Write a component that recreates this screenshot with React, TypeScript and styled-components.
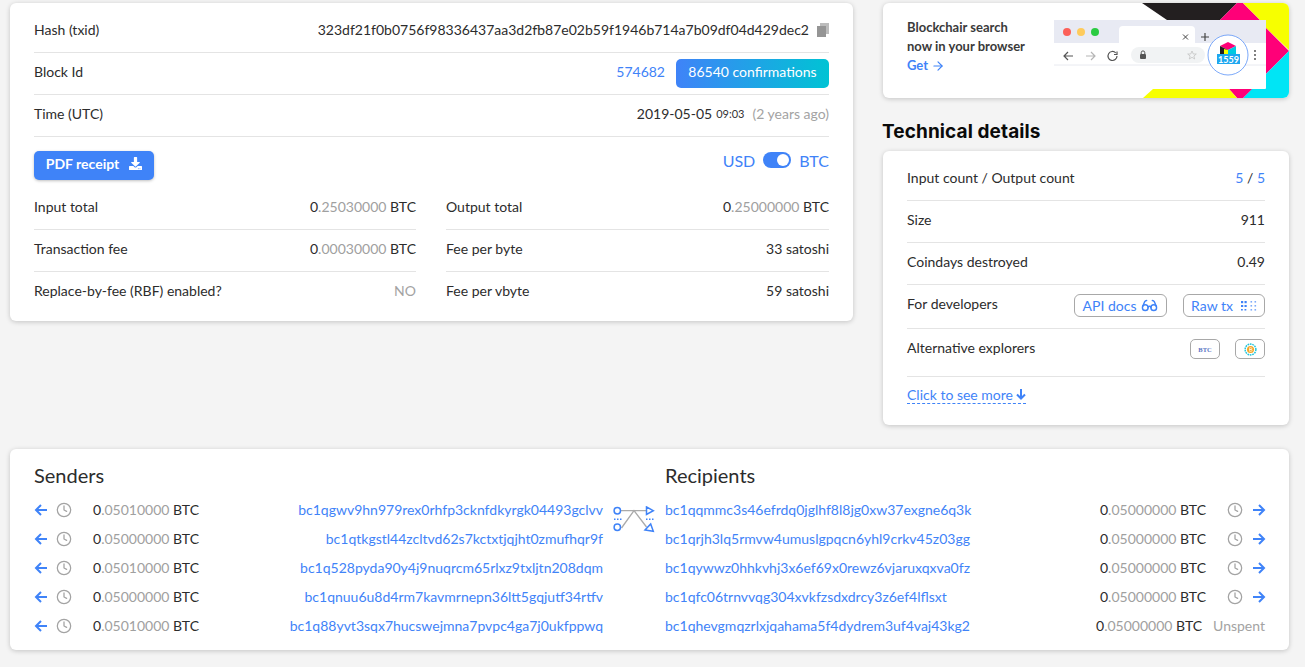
import React from "react";
import styled, { createGlobalStyle } from "styled-components";
import { ArrowRight, Clock, Glasses } from "lucide-react";
import { FaDownload } from "react-icons/fa";

const blue = "#3f83f8";
const line = "#e4e4e4";

const GlobalStyle = createGlobalStyle`
  html, body {
    margin: 0;
    padding: 0;
    background: #f4f4f4;
    font-family: "Lato", "Liberation Sans", sans-serif;
    font-size: 14px;
    color: #2c2c2c;
  }
  * { box-sizing: border-box; }
`;

const Page = styled.div`
  width: 1305px;
  height: 667px;
  overflow: hidden;
  padding: 3px 16px 0 10px;
`;

const TopGrid = styled.div`
  display: grid;
  grid-template-columns: 843px 406px;
  column-gap: 30px;
  align-items: start;
  height: 446px;
`;

const Card = styled.div`
  background: #fff;
  border-radius: 6px;
  box-shadow: 0 1px 5px rgba(0, 0, 0, 0.2);
`;

const MainCard = styled(Card)`
  height: 318px;
  padding: 8px 24px 0;
`;

const Row = styled.div<{ $h?: number; $pb?: number; $last?: boolean }>`
  display: flex;
  align-items: center;
  justify-content: space-between;
  height: ${(p) => p.$h ?? 42}px;
  padding-bottom: ${(p) => p.$pb ?? 4}px;
  border-bottom: ${(p) => (p.$last ? "none" : `1px solid ${line}`)};
`;

const Value = styled.div`
  display: flex;
  align-items: center;
`;

const BlueLink = styled.span`
  color: ${blue};
`;

const CopyWrap = styled.span`
  display: flex;
  margin-left: 8px;
  margin-top: 1px;
`;

const Confirmations = styled.div`
  margin-left: 11px;
  margin-top: 4px;
  width: 153px;
  height: 29px;
  padding-bottom: 4px;
  display: flex;
  align-items: center;
  justify-content: center;
  color: #fff;
  border-radius: 5px;
  background: linear-gradient(90deg, #3f83f8, #00c3d4);
`;

const SmallTime = styled.span`
  font-size: 11px;
  margin-left: 4px;
  color: #333;
`;

const Muted = styled.span`
  color: #a3a3a3;
`;

const Ago = styled(Muted)`
  margin-left: 8px;
`;

const ActionBar = styled.div`
  display: flex;
  justify-content: space-between;
  align-items: flex-start;
  padding-top: 14px;
  height: 51px;
`;

const PdfButton = styled.button`
  display: flex;
  align-items: center;
  justify-content: center;
  gap: 10px;
  width: 120px;
  height: 29px;
  padding: 0 0 5px;
  border: none;
  border-radius: 5px;
  background: ${blue};
  color: #fff;
  font: 700 14px "Lato", sans-serif;
  box-shadow: 0 1px 3px rgba(0, 0, 0, 0.25);
`;

const CurrencySwitch = styled.div`
  display: flex;
  align-items: center;
  gap: 8px;
  font-size: 16px;
  height: 20px;
  margin-top: -1px;
  color: ${blue};
`;

const Toggle = styled.div`
  width: 28px;
  height: 16px;
  border-radius: 8px;
  background: ${blue};
  display: flex;
  justify-content: flex-end;
  align-items: center;
  padding-right: 2px;
  &::after {
    content: "";
    width: 12px;
    height: 12px;
    border-radius: 50%;
    background: #fff;
  }
`;

const Totals = styled.div`
  display: grid;
  grid-template-columns: 382px 383px;
  column-gap: 30px;
`;

const AmountWrap = styled.span`
  white-space: nowrap;
`;

const AmountDecimals = styled.span`
  color: #a0a0a0;
`;

const Amount: React.FC<{ value: string }> = ({ value }) => {
  const [whole, decimals] = value.split(".");
  return (
    <AmountWrap>
      {whole}
      <AmountDecimals>.{decimals}</AmountDecimals> BTC
    </AmountWrap>
  );
};

const Side = styled.div`
  display: flex;
  flex-direction: column;
`;

const Banner = styled(Card)`
  height: 95px;
  overflow: hidden;
  display: flex;
  justify-content: space-between;
  padding-left: 24px;
`;

const BannerText = styled.div`
  padding-top: 15px;
  font-size: 13px;
  font-weight: 700;
  line-height: 19px;
  color: #3a3a3a;
`;

const GetLink = styled.div`
  display: flex;
  align-items: center;
  gap: 3px;
  color: ${blue};
`;

const SideTitle = styled.h2`
  margin: 23px 0 8px -1px;
  font: 700 19px/22px "Inter", sans-serif;
  letter-spacing: 0.1px;
  color: #0a0a0a;
`;

const DetailsCard = styled(Card)`
  height: 274px;
  padding: 8px 24px 0;
`;

const OutlineButton = styled.div<{ $w: number; $gap: number }>`
  width: ${(p) => p.$w}px;
  height: 23px;
  margin-top: 4px;
  display: flex;
  align-items: center;
  justify-content: center;
  gap: ${(p) => p.$gap}px;
  border: 1px solid #a8a8a8;
  border-radius: 6px;
  color: ${blue};
`;

const Chip = styled.div`
  width: 30px;
  height: 20px;
  margin-top: 3px;
  display: flex;
  align-items: center;
  justify-content: center;
  border: 1px solid #a8a8a8;
  border-radius: 5px;
`;

const ChipText = styled.span`
  font: 700 6.5px "Liberation Serif", serif;
  color: #5b73c4;
`;

const ButtonGroup = styled.div<{ $gap: number }>`
  display: flex;
  gap: ${(p) => p.$gap}px;
`;

const SeeMore = styled.div`
  display: inline-flex;
  align-items: center;
  gap: 3px;
  margin-top: 9px;
  color: ${blue};
  border-bottom: 1px dashed ${blue};
  line-height: 17px;
`;

const FlowCard = styled(Card)`
  height: 201px;
  padding: 13px 24px 0;
  display: grid;
  grid-template-columns: 569px 62px 600px;
`;

const FlowTitle = styled.h3`
  margin: 0 0 7px;
  font-size: 20px;
  font-weight: 400;
  line-height: 26px;
  color: #2c2c2c;
`;

const FlowMiddle = styled.div`
  display: flex;
  justify-content: center;
  padding-top: 44px;
`;

const FlowRow = styled.div`
  display: flex;
  align-items: center;
  height: 29px;
`;

const FlowAmount = styled.div`
  margin-left: 21px;
`;

const FlowAddress = styled.span`
  margin-left: auto;
  color: ${blue};
`;

const RecipientAmount = styled.div`
  margin-left: auto;
`;

const ClockIcon = styled(Clock)<{ $left: number }>`
  margin-left: ${(p) => p.$left}px;
  color: #a3a3a3;
  flex: none;
`;

const FlowArrow = styled.svg<{ $flip?: boolean }>`
  width: 14px;
  height: 14px;
  flex: none;
  margin-right: ${(p) => (p.$flip ? "-1px" : "0")};
  margin-left: ${(p) => (p.$flip ? "9px" : "0")};
  transform: ${(p) => (p.$flip ? "scaleX(-1)" : "none")};
`;

const Unspent = styled(Muted)`
  margin-left: 11px;
`;

const RecipientAddress = styled.span`
  color: ${blue};
`;

const senders = [
  ["0.05010000", "bc1qgwv9hn979rex0rhfp3cknfdkyrgk04493gclvv"],
  ["0.05000000", "bc1qtkgstl44zcltvd62s7kctxtjqjht0zmufhqr9f"],
  ["0.05010000", "bc1q528pyda90y4j9nuqrcm65rlxz9txljtn208dqm"],
  ["0.05000000", "bc1qnuu6u8d4rm7kavmrnepn36ltt5gqjutf34rtfv"],
  ["0.05010000", "bc1q88yvt3sqx7hucswejmna7pvpc4ga7j0ukfppwq"],
];

const recipients = [
  ["0.05000000", "bc1qqmmc3s46efrdq0jglhf8l8jg0xw37exgne6q3k"],
  ["0.05000000", "bc1qrjh3lq5rmvw4umuslgpqcn6yhl9crkv45z03gg"],
  ["0.05000000", "bc1qywwz0hhkvhj3x6ef69x0rewz6vjaruxqxva0fz"],
  ["0.05000000", "bc1qfc06trnvvqg304xvkfzsdxdrcy3z6ef4lflsxt"],
  ["0.05000000", "bc1qhevgmqzrlxjqahama5f4dydrem3uf4vaj43kg2"],
];

const SideArrow: React.FC<{ flip?: boolean }> = ({ flip }) => (
  <FlowArrow $flip={flip} viewBox="0 0 14 14" fill="none">
    <path d="M13 7H2M7 2L2 7l5 5" stroke={blue} strokeWidth="2" />
  </FlowArrow>
);

const DownArrow = () => (
  <svg width="10" height="11" viewBox="0 0 10 11" fill="none">
    <path d="M5 0v9.500M1 5.500l4 4 4-4" stroke={blue} strokeWidth="2" />
  </svg>
);

const CopySheets = () => (
  <svg width="12" height="14" viewBox="0 0 12 14">
    <rect x="3" y="0" width="9" height="11" fill="#bcbcbc" />
    <rect x="0" y="3" width="9" height="11" fill="#959595" />
  </svg>
);

const BrowserArt = () => (
  <svg width="235" height="95" viewBox="0 0 235 95">
    <polygon points="88,0 183,0 166,17 113,17" fill="#231f20" />
    <polygon points="183,0 189,0 206,17 166,17" fill="#ff0078" />
    <polygon points="189,0 235,0 235,47 212,25 212,17 206,17" fill="#f7ff00" />
    <polygon points="212,25 235,48 212,71" fill="#ff0078" />
    <polygon points="235,48 235,95 189,95 212,71" fill="#00e5f5" />
    <polygon points="175,86 198,86 189,95 183,95" fill="#ff0078" />
    <polygon points="99,86 175,86 183,95 89,95" fill="#f7ff00" />
    <rect x="0" y="17" width="212" height="69" rx="1" fill="#fff" />
    <rect x="0" y="17" width="212" height="23" fill="#e8eaf3" />
    <path d="M65 40V27a4 4 0 0 1 4-4h68a4 4 0 0 1 4 4v13z" fill="#fff" />
    <circle cx="13" cy="29" r="4" fill="#fc6058" />
    <circle cx="27" cy="29" r="4" fill="#fecb5c" />
    <circle cx="41" cy="29" r="4" fill="#2acb42" />
    <path d="M129 31.500l5 5m0-5l-5 5" stroke="#444" strokeWidth="1" />
    <path d="M151 30v8m-4-4h8" stroke="#444" strokeWidth="1.200" />
    <path d="M0 62h212" stroke="#e8eaf0" strokeWidth="1" />
    <path d="M19 53H10m4-4l-4 4 4 4" stroke="#555" strokeWidth="1.200" fill="none" />
    <path d="M32 53h9m-4-4l4 4-4 4" stroke="#b5b5b5" strokeWidth="1.200" fill="none" />
    <path d="M63 53a4.500 4.500 0 1 1-1.300-3.200M63 48.500v3h-3" stroke="#555" strokeWidth="1.200" fill="none" />
    <rect x="77" y="44" width="74" height="16" rx="8" fill="#f1f3f4" />
    <rect x="86" y="51" width="6" height="5" rx="1" fill="#555" />
    <path d="M87.200 51v-1.300a1.800 1.800 0 0 1 3.600 0V51" stroke="#555" fill="none" />
    <path d="M138 48l1.300 3h3l-2.400 2 .8 3-2.700-1.700-2.700 1.700.8-3-2.400-2h3z" stroke="#c4c4c4" strokeWidth="0.800" fill="none" />
    <circle cx="174" cy="52" r="20" fill="#fff" stroke="#5b93f7" strokeWidth="0.800" />
    <polygon points="174,39 182,43 174,47 166,43" fill="#ff0078" />
    <polygon points="166,43 174,47 174,53 166,53" fill="#231f20" />
    <polygon points="170,46 174,47 174,53 170,53" fill="#f7ff00" />
    <polygon points="182,43 174,47 174,53 182,53" fill="#00c9e0" />
    <rect x="163" y="51" width="23" height="10" fill="#1ea7ef" />
    <text x="174.500" y="59.500" textAnchor="middle" fontFamily="Lato, sans-serif" fontWeight="700" fontSize="9" fill="#fff">
      1559
    </text>
    <circle cx="201" cy="48" r="0.900" fill="#444" />
    <circle cx="201" cy="52" r="0.900" fill="#444" />
    <circle cx="201" cy="56" r="0.900" fill="#444" />
  </svg>
);

const RawIcon = () => (
  <svg width="16" height="12" viewBox="0 0 16 12">
    <g fill={blue}>
      <rect x="0" y="1" width="2.200" height="2.200" />
      <rect x="3.500" y="1" width="2.200" height="2.200" />
      <rect x="0" y="5" width="2.200" height="2" />
      <rect x="3.500" y="5" width="2.200" height="2" />
      <rect x="0" y="9" width="1.800" height="1.500" />
      <rect x="3.500" y="9" width="1.800" height="1.500" />
    </g>
    <g fill="#7fabf9">
      <rect x="9.500" y="1" width="1.600" height="1.600" />
      <rect x="13.500" y="1" width="1.600" height="1.600" />
      <rect x="9.500" y="5" width="1.600" height="1.600" />
      <rect x="13.500" y="5" width="1.600" height="1.600" />
      <rect x="9.500" y="9" width="1.600" height="1.600" />
      <rect x="13.500" y="9" width="1.600" height="1.600" />
    </g>
  </svg>
);

const ExplorerIcon = () => (
  <svg width="13" height="13" viewBox="0 0 14 14">
    <circle cx="7" cy="7" r="5.800" fill="none" stroke="#22c4d8" strokeWidth="1.600" strokeDasharray="1.800 0.800" />
    <circle cx="7" cy="7" r="3.800" fill="#f5a623" />
    <path d="M6 5v4M6 5h1.500a1 1 0 0 1 0 2H6m0 0h1.700a1 1 0 0 1 0 2H6" stroke="#fff" strokeWidth="0.700" fill="none" />
  </svg>
);

const TransferIcon = () => (
  <svg width="44" height="28" viewBox="0 0 44 28" fill="none">
    <path d="M9 4.700h25M9.500 22L22 4.700 34.500 21" stroke="#aaa" strokeWidth="1.300" />
    <circle cx="5.300" cy="4.700" r="3.200" stroke={blue} strokeWidth="1.500" fill="#fff" />
    <circle cx="5.300" cy="21.300" r="3.200" stroke={blue} strokeWidth="1.500" fill="#fff" />
    <path d="M34.500 1l6.800 3.700-6.800 3.700z" stroke={blue} strokeWidth="1.500" fill="#fff" />
    <path d="M38.700 18l2.600 7.300-8.300-1.300z" stroke={blue} strokeWidth="1.500" fill="#fff" />
    <path d="M2 13.300h1.500M5 13.300h1.500M8 13.300h1.500M34 13.300h1.500M37 13.300h1.500M40 13.300h1.500" stroke={blue} strokeWidth="1.500" />
  </svg>
);

export default function App() {
  return (
    <>
      <GlobalStyle />
      <Page>
        <TopGrid>
          <MainCard>
            <Row>
              <span>Hash (txid)</span>
              <Value>
                323df21f0b0756f98336437aa3d2fb87e02b59f1946b714a7b09df04d429dec2
                <CopyWrap>
                  <CopySheets />
                </CopyWrap>
              </Value>
            </Row>
            <Row>
              <span>Block Id</span>
              <Value>
                <BlueLink>574682</BlueLink>
                <Confirmations>86540 confirmations</Confirmations>
              </Value>
            </Row>
            <Row>
              <span>Time (UTC)</span>
              <Value>
                2019-05-05
                <SmallTime>09:03</SmallTime>
                <Ago>(2 years ago)</Ago>
              </Value>
            </Row>
            <ActionBar>
              <PdfButton>
                PDF receipt
                <FaDownload size={13} />
              </PdfButton>
              <CurrencySwitch>
                USD
                <Toggle />
                BTC
              </CurrencySwitch>
            </ActionBar>
            <Totals>
              <Side>
                <Row>
                  <span>Input total</span>
                  <Amount value="0.25030000" />
                </Row>
                <Row>
                  <span>Transaction fee</span>
                  <Amount value="0.00030000" />
                </Row>
                <Row $last $pb={6}>
                  <span>Replace-by-fee (RBF) enabled?</span>
                  <Muted>NO</Muted>
                </Row>
              </Side>
              <Side>
                <Row>
                  <span>Output total</span>
                  <Amount value="0.25000000" />
                </Row>
                <Row>
                  <span>Fee per byte</span>
                  <span>33 satoshi</span>
                </Row>
                <Row $last $pb={6}>
                  <span>Fee per vbyte</span>
                  <span>59 satoshi</span>
                </Row>
              </Side>
            </Totals>
          </MainCard>
          <Side>
            <Banner>
              <BannerText>
                Blockchair search
                <br />
                now in your browser
                <GetLink>
                  Get <ArrowRight size={14} strokeWidth={2} />
                </GetLink>
              </BannerText>
              <BrowserArt />
            </Banner>
            <SideTitle>Technical details</SideTitle>
            <DetailsCard>
              <Row>
                <span>Input count / Output count</span>
                <span>
                  <BlueLink>5</BlueLink> / <BlueLink>5</BlueLink>
                </span>
              </Row>
              <Row>
                <span>Size</span>
                <span>911</span>
              </Row>
              <Row>
                <span>Coindays destroyed</span>
                <span>0.49</span>
              </Row>
              <Row $h={44} $pb={6}>
                <span>For developers</span>
                <ButtonGroup $gap={16}>
                  <OutlineButton $w={93} $gap={5}>
                    API docs
                    <Glasses size={17} />
                  </OutlineButton>
                  <OutlineButton $w={82} $gap={8}>
                    Raw tx
                    <RawIcon />
                  </OutlineButton>
                </ButtonGroup>
              </Row>
              <Row $h={48} $pb={10}>
                <span>Alternative explorers</span>
                <ButtonGroup $gap={15}>
                  <Chip>
                    <ChipText>BTC</ChipText>
                  </Chip>
                  <Chip>
                    <ExplorerIcon />
                  </Chip>
                </ButtonGroup>
              </Row>
              <SeeMore>
                Click to see more
                <DownArrow />
              </SeeMore>
            </DetailsCard>
          </Side>
        </TopGrid>
        <FlowCard>
          <div>
            <FlowTitle>Senders</FlowTitle>
            {senders.map(([amount, address]) => (
              <FlowRow key={address}>
                <SideArrow />
                <ClockIcon size={16} strokeWidth={1.9} $left={8} />
                <FlowAmount>
                  <Amount value={amount} />
                </FlowAmount>
                <FlowAddress>{address}</FlowAddress>
              </FlowRow>
            ))}
          </div>
          <FlowMiddle>
            <div>
              <TransferIcon />
            </div>
          </FlowMiddle>
          <div>
            <FlowTitle>Recipients</FlowTitle>
            {recipients.map(([amount, address], i) => (
              <FlowRow key={address}>
                <RecipientAddress>{address}</RecipientAddress>
                <RecipientAmount>
                  <Amount value={amount} />
                </RecipientAmount>
                {i < 4 ? (
                  <>
                    <ClockIcon size={16} strokeWidth={1.9} $left={21} />
                    <SideArrow flip />
                  </>
                ) : (
                  <Unspent>Unspent</Unspent>
                )}
              </FlowRow>
            ))}
          </div>
        </FlowCard>
      </Page>
    </>
  );
}
